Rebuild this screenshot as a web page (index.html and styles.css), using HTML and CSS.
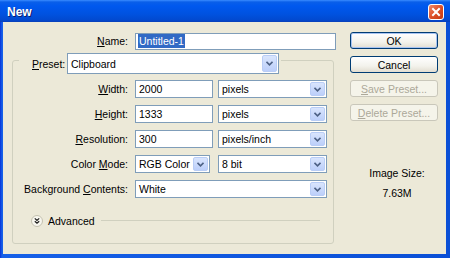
FILE: index.html
```html
<!DOCTYPE html>
<html lang="en">
<head>
    <meta charset="UTF-8">
    <title>New</title>
    <link rel="stylesheet" href="styles.css">
</head>
<body>
    <div class="window">
        <div class="titlebar">
            <span class="title">New</span>
            <span class="close">
                <svg width="14" height="14" viewBox="0 0 14 14"><path d="M4 4 L10 10 M10 4 L4 10" stroke="#fff" stroke-width="2" stroke-linecap="square"/></svg>
            </span>
        </div>
        <div class="client">
            <div class="main">
                <div class="row name-row">
                    <label class="lbl name-lbl"><u>N</u>ame:</label>
                    <div class="field name-field"><span class="selected">Untitled-1</span></div>
                </div>
                <div class="group">
                    <div class="group-head">
                        <label class="preset-lbl"><u>P</u>reset:</label>
                        <div class="combo preset">
                            <span class="combo-text">Clipboard</span>
                            <span class="drop"><svg width="7" height="5" viewBox="0 0 7 5"><path d="M0.5 0.8 L3.5 3.8 L6.5 0.8" fill="none" stroke="#4d6185" stroke-width="1.6"/></svg></span>
                        </div>
                    </div>
                    <div class="row">
                        <label class="lbl"><u>W</u>idth:</label>
                        <div class="field num">2000</div>
                        <div class="combo unit">
                            <span class="combo-text">pixels</span>
                            <span class="drop"><svg width="7" height="5" viewBox="0 0 7 5"><path d="M0.5 0.8 L3.5 3.8 L6.5 0.8" fill="none" stroke="#4d6185" stroke-width="1.6"/></svg></span>
                        </div>
                    </div>
                    <div class="row">
                        <label class="lbl"><u>H</u>eight:</label>
                        <div class="field num">1333</div>
                        <div class="combo unit">
                            <span class="combo-text">pixels</span>
                            <span class="drop"><svg width="7" height="5" viewBox="0 0 7 5"><path d="M0.5 0.8 L3.5 3.8 L6.5 0.8" fill="none" stroke="#4d6185" stroke-width="1.6"/></svg></span>
                        </div>
                    </div>
                    <div class="row">
                        <label class="lbl"><u>R</u>esolution:</label>
                        <div class="field num">300</div>
                        <div class="combo unit">
                            <span class="combo-text">pixels/inch</span>
                            <span class="drop"><svg width="7" height="5" viewBox="0 0 7 5"><path d="M0.5 0.8 L3.5 3.8 L6.5 0.8" fill="none" stroke="#4d6185" stroke-width="1.6"/></svg></span>
                        </div>
                    </div>
                    <div class="row">
                        <label class="lbl">Color <u>M</u>ode:</label>
                        <div class="combo mode">
                            <span class="combo-text">RGB Color</span>
                            <span class="drop"><svg width="7" height="5" viewBox="0 0 7 5"><path d="M0.5 0.8 L3.5 3.8 L6.5 0.8" fill="none" stroke="#4d6185" stroke-width="1.6"/></svg></span>
                        </div>
                        <div class="combo unit bits">
                            <span class="combo-text">8 bit</span>
                            <span class="drop"><svg width="7" height="5" viewBox="0 0 7 5"><path d="M0.5 0.8 L3.5 3.8 L6.5 0.8" fill="none" stroke="#4d6185" stroke-width="1.6"/></svg></span>
                        </div>
                    </div>
                    <div class="row">
                        <label class="lbl">Background <u>C</u>ontents:</label>
                        <div class="combo background">
                            <span class="combo-text">White</span>
                            <span class="drop"><svg width="7" height="5" viewBox="0 0 7 5"><path d="M0.5 0.8 L3.5 3.8 L6.5 0.8" fill="none" stroke="#4d6185" stroke-width="1.6"/></svg></span>
                        </div>
                    </div>
                    <div class="advanced">
                        <svg class="adv-icon" width="12" height="12" viewBox="0 0 12 12">
                            <circle cx="6" cy="6" r="5.5" fill="#f7f6ee" stroke="#c4c1b0"/>
                            <path d="M3.8 3.4 L6 5.4 L8.2 3.4 M3.8 6.3 L6 8.3 L8.2 6.3" fill="none" stroke="#222" stroke-width="1.2"/>
                        </svg>
                        <span class="adv-text">Advanced</span>
                        <span class="adv-line"></span>
                    </div>
                </div>
            </div>
            <div class="side">
                <div class="btn default">OK</div>
                <div class="btn">Cancel</div>
                <div class="btn disabled"><u>S</u>ave Preset...</div>
                <div class="btn disabled"><u>D</u>elete Preset...</div>
                <div class="info">
                    <div class="info-label">Image Size:</div>
                    <div class="info-value">7.63M</div>
                </div>
            </div>
        </div>
    </div>
</body>
</html>
```

FILE: styles.css
```css
body {
    margin: 0;
    font-family: "Liberation Sans", Arial, sans-serif;
    font-size: 10.5px;
    color: #000;
}

.window {
    width: 450px;
    height: 258px;
    display: flex;
    flex-direction: column;
    background: linear-gradient(90deg, #0831d9 0, #1660e8 2px, #0a4fd6 100%);
    box-sizing: border-box;
}

.titlebar {
    height: 22px;
    flex: none;
    display: flex;
    align-items: center;
    justify-content: space-between;
    padding: 0 6px 0 7px;
    background: linear-gradient(#3a8cff 0, #0a5fe9 2px, #0058ee 6px, #0052e0 14px, #0249cf 20px, #0a3fb8 22px);
}

.title {
    color: #fff;
    font-weight: bold;
    font-size: 12px;
    text-shadow: 1px 1px #0a1e6e;
    margin-top: 1px;
}

.close {
    width: 16px;
    height: 16px;
    box-sizing: border-box;
    border: 1px solid #fff;
    border-radius: 3px;
    background: linear-gradient(135deg, #f08a6c 0, #de4f28 50%, #c23a13 100%);
    display: flex;
    align-items: center;
    justify-content: center;
    margin-top: 1px;
}

.client {
    flex: 1;
    margin: 0 4px 4px 3px;
    background: #ece9d8;
    display: flex;
}

.main {
    width: 337px;
    padding: 10px 0 0 9px;
    box-sizing: border-box;
}

.row {
    display: flex;
    align-items: center;
    height: 18px;
}

.lbl {
    width: 115px;
    padding-right: 7px;
    text-align: right;
    flex: none;
}

.name-lbl {
    width: 116px;
}

.field {
    height: 18px;
    box-sizing: border-box;
    border: 1px solid #7f9db9;
    background: #fff;
    display: flex;
    align-items: center;
    padding-left: 2px;
}

.name-row .field {
    height: 17px;
}

.name-field {
    width: 201px;
}

.selected {
    background: #316ac5;
    color: #fff;
    padding: 1px 1px;
}

.num {
    width: 78px;
    padding-left: 3px;
}

.combo {
    height: 18px;
    box-sizing: border-box;
    border: 1px solid #7f9db9;
    background: #fff;
    display: flex;
    align-items: center;
    justify-content: space-between;
}

.combo-text {
    padding-left: 3px;
}

.drop {
    width: 15px;
    align-self: stretch;
    margin: 1px;
    border: 1px solid #b9cdf6;
    border-radius: 2px;
    background: linear-gradient(#d9e5fd, #bccffa);
    display: flex;
    align-items: center;
    justify-content: center;
    box-sizing: border-box;
}

.group {
    margin-top: 10px;
    width: 322px;
    height: 184px;
    box-sizing: border-box;
    border: 1px solid #d0d0bf;
    border-radius: 3px;
}

.group-head {
    display: flex;
    align-items: center;
    margin: -8px 0 6px 6px;
    padding: 0 2px 0 13px;
    width: fit-content;
    background: #ece9d8;
}

.preset-lbl {
    width: 35px;
}

.preset {
    width: 212px;
    height: 21px;
}

.group .row + .row {
    margin-top: 7px;
}

.unit {
    width: 109px;
    margin-left: 5px;
}

.mode {
    width: 75px;
}

.bits {
    margin-left: 8px;
}

.background {
    width: 192px;
}

.advanced {
    display: flex;
    align-items: center;
    margin: 16px 13px 0 18px;
    height: 13px;
}

.adv-icon {
    flex: none;
}

.adv-text {
    margin-left: 5px;
}

.adv-line {
    flex: 1;
    height: 1px;
    background: #d0d0bf;
    margin-left: 6px;
}

.side {
    flex: 1;
    padding: 10px 0 0 10px;
}

.btn {
    width: 88px;
    height: 17px;
    box-sizing: border-box;
    border: 1px solid #003c74;
    border-radius: 3px;
    background: linear-gradient(#ffffff, #f3f2ec 60%, #e2ddd1);
    display: flex;
    align-items: center;
    justify-content: center;
    margin-bottom: 7px;
}

.btn.default {
    box-shadow: inset 0 0 0 1px #a8c4f2;
}

.btn.disabled {
    border-color: #c9c7ba;
    background: #f5f4ea;
    color: #aca899;
}

.info {
    width: 82px;
    padding-left: 6px;
    text-align: center;
    margin-top: 46px;
}

.info-value {
    margin-top: 8px;
}
```
